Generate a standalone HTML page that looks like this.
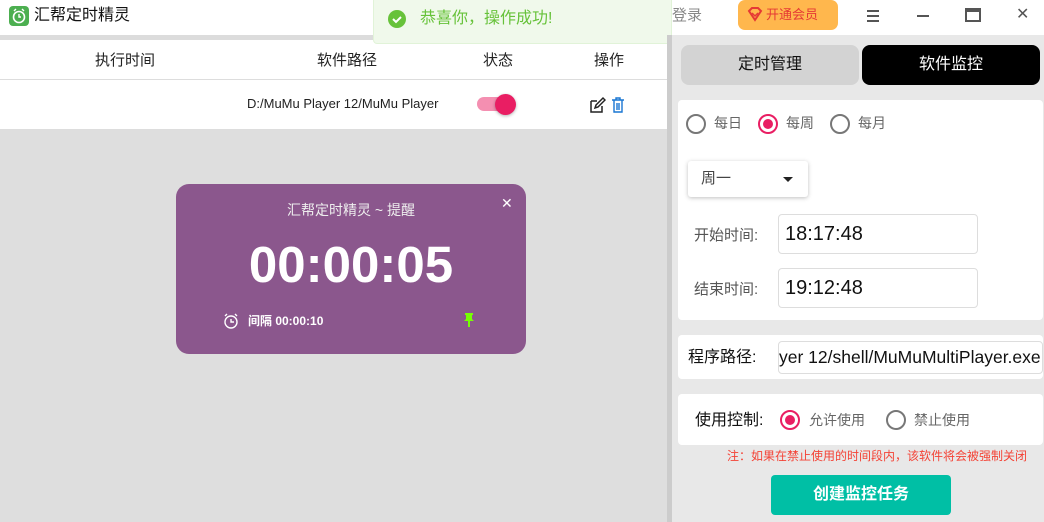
<!DOCTYPE html><html><head><meta charset="utf-8"><style>
*{margin:0;padding:0;box-sizing:border-box}
body{width:1044px;height:522px;overflow:hidden;position:relative;font-family:"Liberation Sans","Noto Sans CJK SC",sans-serif;background:#dedede;color:#222;line-height:1.15}
.a{position:absolute}
.radio{position:absolute;width:20px;height:20px;border:2px solid #777;border-radius:50%}
.radio.on{border-color:#e91e63}
.radio.on::after{content:"";position:absolute;left:3px;top:3px;width:10px;height:10px;border-radius:50%;background:#e91e63}
.inp{position:absolute;background:#fff;border:1px solid #ddd;border-radius:4px;font-size:20px;color:#111;padding-left:6px;display:flex;align-items:center;overflow:hidden;white-space:nowrap}
</style></head><body>
<div class="a" style="left:0;top:0;width:1044px;height:35px;background:#fff"></div>
<div class="a" style="left:9px;top:6px;width:20px;height:20px;background:#4caf50;border-radius:4px"><svg width="20" height="20"><circle cx="10" cy="11" r="5.5" fill="none" stroke="#fff" stroke-width="1.6"/><path d="M5 5l2-2M15 5l-2-2M10 8v3h2" stroke="#fff" stroke-width="1.4" fill="none"/></svg></div>
<div class="a" style="left:34px;top:7px;font-size:16px;color:#111">汇帮定时精灵</div>
<div class="a" style="left:672px;top:7px;font-size:15px;color:#888">登录</div>
<div class="a" style="left:738px;top:0;width:100px;height:30px;background:#ffb74d;border-radius:7px;color:#e53935;font-size:13px;padding:8px 0 0 28px">开通会员</div>
<svg class="a" style="left:747px;top:7px" width="16" height="16"><path d="M2 4l3-3h6l3 3-6 9z" fill="none" stroke="#e53935" stroke-width="2"/><path d="M5 6l3 3 3-3" fill="none" stroke="#e53935" stroke-width="1.5"/></svg>
<div class="a" style="left:867px;top:10px;width:12px;height:2px;background:#555;box-shadow:0 5px 0 #555,0 10px 0 #555"></div>
<div class="a" style="left:917px;top:15px;width:12px;height:2px;background:#555"></div>
<div class="a" style="left:965px;top:8px;width:16px;height:14px;border:2px solid #555;border-top-width:4px"></div>
<div class="a" style="left:1016px;top:6px;font-size:16px;color:#555">✕</div>
<div class="a" style="left:0;top:35px;width:667px;height:5px;background:#dcdcdc"></div>
<div class="a" style="left:0;top:40px;width:667px;height:90px;background:#fff"></div>
<div class="a" style="left:0;top:79px;width:667px;height:1px;background:#ddd"></div>
<div class="a" style="left:0;top:129px;width:667px;height:1px;background:#ddd"></div>
<div class="a" style="left:95px;top:52px;font-size:15px">执行时间</div>
<div class="a" style="left:317px;top:52px;font-size:15px">软件路径</div>
<div class="a" style="left:483px;top:52px;font-size:15px">状态</div>
<div class="a" style="left:594px;top:52px;font-size:15px">操作</div>
<div class="a" style="left:247px;top:97px;font-size:13px">D:/MuMu Player 12/MuMu Player</div>
<div class="a" style="left:477px;top:97px;width:34px;height:14px;background:#f48fb1;border-radius:7px"></div>
<div class="a" style="left:495px;top:94px;width:21px;height:21px;background:#e91e63;border-radius:50%;box-shadow:0 1px 3px rgba(0,0,0,.3)"></div>
<svg class="a" style="left:588px;top:96px" width="18" height="18"><path d="M3 5h6M3 5v11h11v-6" fill="none" stroke="#222" stroke-width="1.5"/><path d="M7 12l1-3 7-7 2 2-7 7z" fill="none" stroke="#222" stroke-width="1.5"/></svg>
<svg class="a" style="left:610px;top:96px" width="16" height="18"><path d="M2 4h12M6 4V2h4v2M4 4v12h8V4M7 7v7M9 7v7" fill="none" stroke="#1976d2" stroke-width="1.4"/></svg>
<div class="a" style="left:373px;top:0;width:299px;height:44px;background:#f0f9eb;border:1px solid #e1f3d8;border-top:none;border-radius:0 0 4px 4px"></div>
<div class="a" style="left:388px;top:10px;width:18px;height:18px;border-radius:50%;background:#67c23a"><svg width="18" height="18"><path d="M5 9l3 3 5-5" fill="none" stroke="#fff" stroke-width="2"/></svg></div>
<div class="a" style="left:420px;top:10px;font-size:16px;color:#67c23a">恭喜你，操作成功!</div>
<div class="a" style="left:176px;top:184px;width:350px;height:170px;background:#8b578d;border-radius:13px;color:#fff"></div>
<div class="a" style="left:176px;top:202px;width:350px;text-align:center;font-size:14px;color:#eee">汇帮定时精灵 ~ 提醒</div>
<div class="a" style="left:501px;top:195px;font-size:14px;color:#fff">✕</div>
<div class="a" style="left:176px;top:236px;width:350px;text-align:center;font-size:51px;font-weight:bold;color:#fff">00:00:05</div>
<svg class="a" style="left:223px;top:313px" width="16" height="16"><circle cx="8" cy="9" r="6" fill="none" stroke="#fff" stroke-width="1.4"/><path d="M8 6v3h3M2 3l2-2M14 3l-2-2" fill="none" stroke="#fff" stroke-width="1.4"/></svg>
<div class="a" style="left:248px;top:315px;font-size:12px;font-weight:bold;color:#fff">间隔 00:00:10</div>
<svg class="a" style="left:462px;top:312px" width="14" height="16"><path d="M3 1h8v2h-1v4l2 2H2l2-2V3H3zM6 9h2v6H6z" fill="#76ff03"/></svg>
<div class="a" style="left:667px;top:35px;width:5px;height:487px;background:#ccc"></div>
<div class="a" style="left:672px;top:35px;width:372px;height:487px;background:#e8e8e8"></div>
<div class="a" style="left:681px;top:45px;width:178px;height:40px;background:#d3d3d3;border-radius:8px;text-align:center;line-height:40px;font-size:16px;color:#111">定时管理</div>
<div class="a" style="left:862px;top:45px;width:178px;height:40px;background:#000;border-radius:8px;text-align:center;line-height:40px;font-size:16px;color:#fff">软件监控</div>
<div class="a" style="left:678px;top:100px;width:365px;height:220px;background:#fff;border-radius:4px"></div>
<div class="radio" style="left:686px;top:114px"></div><div class="a" style="left:714px;top:115px;font-size:14px;color:#666">每日</div>
<div class="radio on" style="left:758px;top:114px"></div><div class="a" style="left:786px;top:115px;font-size:14px;color:#666">每周</div>
<div class="radio" style="left:830px;top:114px"></div><div class="a" style="left:858px;top:115px;font-size:14px;color:#666">每月</div>
<div class="a" style="left:688px;top:161px;width:120px;height:36px;background:#fff;box-shadow:0 1px 4px rgba(0,0,0,.25);border-radius:3px;font-size:15px;color:#444;padding:9px 0 0 13px">周一</div>
<div class="a" style="left:783px;top:177px;border:5px solid transparent;border-top:5px solid #222;border-bottom:0"></div>
<div class="a" style="left:694px;top:227px;font-size:15px;color:#555">开始时间:</div>
<div class="inp" style="left:778px;top:214px;width:200px;height:40px">18:17:48</div>
<div class="a" style="left:694px;top:281px;font-size:15px;color:#555">结束时间:</div>
<div class="inp" style="left:778px;top:268px;width:200px;height:40px">19:12:48</div>
<div class="a" style="left:678px;top:335px;width:365px;height:44px;background:#fff;border-radius:4px"></div>
<div class="a" style="left:688px;top:349px;font-size:16px;color:#111">程序路径:</div>
<div class="inp" style="left:778px;top:341px;width:265px;height:33px;font-size:17.5px;padding-left:0">yer 12/shell/MuMuMultiPlayer.exe</div>
<div class="a" style="left:678px;top:394px;width:365px;height:51px;background:#fff;border-radius:4px"></div>
<div class="a" style="left:695px;top:412px;font-size:16px;color:#111">使用控制:</div>
<div class="radio on" style="left:780px;top:410px"></div><div class="a" style="left:809px;top:412px;font-size:14px;color:#666">允许使用</div>
<div class="radio" style="left:886px;top:410px"></div><div class="a" style="left:914px;top:412px;font-size:14px;color:#666">禁止使用</div>
<div class="a" style="left:727px;top:450px;font-size:12px;color:#f44336;white-space:nowrap">注：如果在禁止使用的时间段内，该软件将会被强制关闭</div>
<div class="a" style="left:771px;top:475px;width:180px;height:40px;background:#00bfa5;border-radius:4px;text-align:center;line-height:40px;color:#fff;font-size:16px;font-weight:bold">创建监控任务</div>
</body></html>
